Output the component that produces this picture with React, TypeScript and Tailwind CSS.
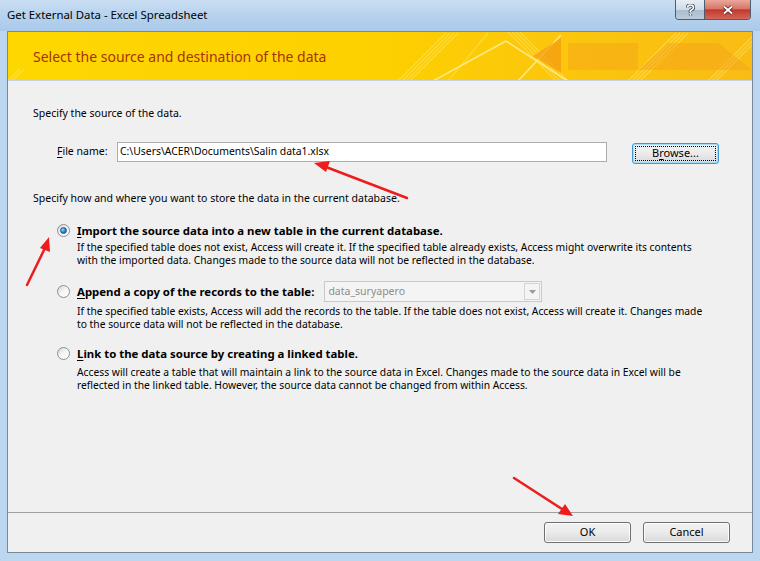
const Radio = ({ checked }: { checked?: boolean }) => (
  <span className="relative flex h-[13px] w-[13px] shrink-0 items-center justify-center rounded-full border border-[#8e8f8f] bg-gradient-to-br from-[#d6d6d6] via-[#f6f6f6] to-[#ffffff]">
    {checked && (
      <span className="h-[7px] w-[7px] rounded-full border border-[#1b5c8c] bg-[radial-gradient(circle_at_35%_35%,#9fd6ff,#1f78c4_60%,#0d4f8e)]" />
    )}
  </span>
);

const Btn = ({ children, focus }: { children: React.ReactNode; focus?: boolean }) => (
  <div
    className={`flex h-[21px] w-[87px] items-center justify-center rounded-[3px] border bg-gradient-to-b from-[#f2f2f2] via-[#ebebeb] to-[#d9d9d9] text-[11px] text-black ${
      focus ? "border-[#3c9bd6] shadow-[inset_0_0_0_1px_#a7dcf5]" : "border-[#707070] shadow-[inset_0_0_0_1px_#fcfcfc]"
    }`}
  >
    {focus ? (
      <span className="flex h-[15px] w-[81px] items-center justify-center border border-dotted border-black">
        {children}
      </span>
    ) : (
      children
    )}
  </div>
);

const Option = ({
  checked,
  label,
  ul,
  lines,
  extra,
  gap,
}: {
  checked?: boolean;
  label: string;
  ul: string;
  lines: string[];
  extra?: React.ReactNode;
  gap: string;
}) => (
  <div className="flex flex-col">
    <div className="flex h-[21px] items-center">
      <div className="flex w-[20px] items-center">
        <Radio checked={checked} />
      </div>
      <span className="text-[11.4px] font-bold whitespace-nowrap text-black">
        <span className="underline underline-offset-2">{ul}</span>
        {label}
      </span>
      {extra}
    </div>
    <div className={`${gap} pl-[20px] text-[10.3px] leading-[13px] whitespace-nowrap text-black`}>
      {lines.map((l) => (
        <div key={l}>{l}</div>
      ))}
    </div>
  </div>
);

export default function App() {
  return (
    <div className="relative h-[561px] w-[760px] overflow-hidden bg-[#bcd6f0] font-['Noto_Sans',sans-serif]">
      {/* title bar */}
      <div className="relative flex h-[31px] items-start bg-gradient-to-b from-[#c9def3] via-[#b7d2ee] to-[#aac9ea] pl-[7px]">
        <span className="mt-[6px] text-[11.4px] text-black">Get External Data - Excel Spreadsheet</span>
        <div className="ml-auto mr-[9px] flex h-[20px] overflow-hidden rounded-b-[4px] border border-t-0 border-[#4e5d6d]">
          <div className="flex w-[29px] items-center justify-center border-r border-[#4e5d6d] bg-[linear-gradient(to_bottom,#e6edf5_0%,#cfdbe7_50%,#a9bccf_51%,#bccbd9_100%)]">
            <svg width="9" height="12" viewBox="0 0 9 12">
              <path
                d="M1.5 3.5Q1.5 1 4.5 1T7.5 3.5Q7.5 5 5.5 6T4.5 8.2M4.5 10v1.5"
                fill="none"
                stroke="#3b4450"
                strokeWidth="3.2"
              />
              <path
                d="M1.5 3.5Q1.5 1 4.5 1T7.5 3.5Q7.5 5 5.5 6T4.5 8.2M4.5 10v1.5"
                fill="none"
                stroke="#ffffff"
                strokeWidth="1.6"
              />
            </svg>
          </div>
          <div className="flex w-[45px] items-center justify-center bg-[linear-gradient(to_bottom,#e9a89b_0%,#d8776a_45%,#c2392b_52%,#d2665a_100%)]">
            <svg width="12" height="10" viewBox="0 0 12 10">
              <path d="M2 1.5l8 7M10 1.5l-8 7" stroke="#4a1d18" strokeWidth="3.6" />
              <path d="M2 1.5l8 7M10 1.5l-8 7" stroke="#ffffff" strokeWidth="2" />
            </svg>
          </div>
        </div>
      </div>

      {/* client area */}
      <div className="mx-[7px] flex h-[522px] flex-col border border-[#76889a] bg-[#f0f0f0]">
        {/* header band */}
        <div className="relative flex h-[49px] items-center overflow-hidden border-b border-[#c4d3e2] bg-gradient-to-r from-[#fed700] via-[#fdd000] to-[#f9bc14] pl-[25px]">
          <svg className="absolute inset-0" width="744" height="49" viewBox="0 0 744 49">
            <g stroke="#ffe45c" strokeWidth="1.2" opacity="0.6">
              <line x1="0" y1="49" x2="12" y2="37" />
              <line x1="4" y1="49" x2="16" y2="37" />
              <line x1="390" y1="49" x2="438" y2="1" />
              <line x1="394" y1="49" x2="442" y2="1" />
              <line x1="398" y1="49" x2="446" y2="1" />
              <line x1="402" y1="49" x2="450" y2="1" />
              <line x1="440" y1="49" x2="480" y2="1" />
              <line x1="500" y1="0" x2="548" y2="49" />
              <line x1="504" y1="0" x2="552" y2="49" />
              <line x1="508" y1="0" x2="556" y2="49" />
              <line x1="512" y1="0" x2="560" y2="49" />
              <line x1="620" y1="49" x2="668" y2="1" />
              <line x1="624" y1="49" x2="672" y2="1" />
              <line x1="628" y1="49" x2="676" y2="1" />
              <line x1="632" y1="49" x2="680" y2="1" />
              <line x1="700" y1="49" x2="744" y2="5" />
              <line x1="704" y1="49" x2="744" y2="9" />
              <line x1="708" y1="49" x2="744" y2="13" />
            </g>
            <g stroke="#fff3a8" strokeWidth="1.5" opacity="0.8">
              <line x1="425" y1="49" x2="498" y2="9" />
              <line x1="498" y1="9" x2="560" y2="49" />
              <line x1="510" y1="49" x2="553" y2="3" />
            </g>
            <polygon points="553,6 553,41 525,24" fill="#f49a12" opacity="0.7" />
            <rect x="560" y="11" width="70" height="27" fill="#f6a21a" opacity="0.45" />
            <polygon points="660,11 710,11 744,38 630,38" fill="#f4a01c" opacity="0.45" />
          </svg>
          <span className="relative text-[14px] text-[#a8320c]">Select the source and destination of the data</span>
        </div>

        {/* body */}
        <div className="flex flex-1 flex-col pl-[25px] text-[10.5px] text-black">
          <div className="mt-[24px] h-[16px] leading-[16px]">Specify the source of the data.</div>

          <div className="mt-[21px] flex h-[20px] items-center pl-[24px]">
            <span className="w-[60px]">
              <span className="underline underline-offset-2">F</span>ile name:
            </span>
            <div className="flex h-[20px] w-[490px] items-center border border-[#abadb3] bg-white pl-[2px] text-[10.4px]">
              C:\Users\ACER\Documents\Salin data1.xlsx
            </div>
            <div className="ml-[25px] mt-[2px]">
              <Btn focus>
                <span>
                  B<span className="underline underline-offset-2">r</span>owse...
                </span>
              </Btn>
            </div>
          </div>

          <div className="mt-[28px] h-[16px] leading-[16px]">
            Specify how and where you want to store the data in the current database.
          </div>

          <div className="mt-[14px] flex flex-col pl-[24px]">
            <Option
              checked
              gap="mt-0"
              ul="I"
              label="mport the source data into a new table in the current database."
              lines={[
                "If the specified table does not exist, Access will create it. If the specified table already exists, Access might overwrite its contents",
                "with the imported data. Changes made to the source data will not be reflected in the database.",
              ]}
            />
            <div className="mt-[14px]">
              <Option
                gap="mt-[3px]"
                ul="A"
                label="ppend a copy of the records to the table:"
                extra={
                  <div className="ml-[10px] flex h-[21px] w-[218px] items-center border border-[#c9c9c9] bg-[#f4f4f4] pl-[3px] text-[10.5px] text-[#8d8d8d]">
                    <span className="flex-1">data_suryapero</span>
                    <span className="mr-[1px] flex h-[17px] w-[16px] items-center justify-center border border-[#d4d4d4] bg-[#f4f4f4]">
                      <svg width="7" height="4" viewBox="0 0 7 4">
                        <path d="M0 0h7L3.5 4z" fill="#9a9a9a" />
                      </svg>
                    </span>
                  </div>
                }
                lines={[
                  "If the specified table exists, Access will add the records to the table. If the table does not exist, Access will create it. Changes made",
                  "to the source data will not be reflected in the database.",
                ]}
              />
            </div>
            <div className="mt-[12px]">
              <Option
                gap="mt-[2px]"
                ul="L"
                label="ink to the data source by creating a linked table."
                lines={[
                  "Access will create a table that will maintain a link to the source data in Excel. Changes made to the source data in Excel will be",
                  "reflected in the linked table. However, the source data cannot be changed from within Access.",
                ]}
              />
            </div>
          </div>
        </div>

        {/* footer */}
        <div className="flex h-[40px] items-start justify-end gap-[12px] border-t border-[#a0a0a0] pr-[22px] pt-[9px]">
          <Btn>OK</Btn>
          <Btn>Cancel</Btn>
        </div>
      </div>

      {/* red annotation arrows */}
      <svg className="pointer-events-none absolute inset-0" width="760" height="561" viewBox="0 0 760 561">
        <g stroke="#ee1c1c" strokeWidth="2.5" fill="#ee1c1c" strokeLinecap="round">
          <line x1="407" y1="198" x2="326" y2="167" />
          <polygon points="314,163 330,161 326,172" stroke="none" />
          <line x1="27" y1="285" x2="45" y2="248" />
          <polygon points="49,237 50,252 40,248" stroke="none" />
          <line x1="514" y1="478" x2="562" y2="509" />
          <polygon points="573,516 558,514 565,504" stroke="none" />
        </g>
      </svg>
    </div>
  );
}
